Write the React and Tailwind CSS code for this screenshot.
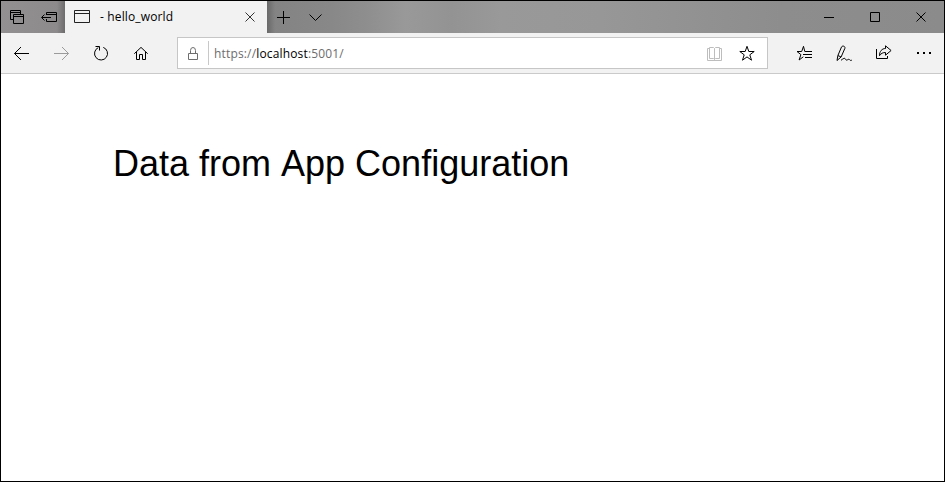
function Icon({ box, w, h, className = "", children }) {
  return (
    <svg
      viewBox={box}
      width={w}
      height={h}
      fill="none"
      stroke="currentColor"
      strokeWidth="1"
      className={`block shrink-0 ${className}`}
    >
      {children}
    </svg>
  );
}

function TitleBar() {
  return (
    <div className="flex h-8 shrink-0 bg-[linear-gradient(90deg,#929090_0px,#8c8a8a_60px,#838383_270px,#888888_330px,#8e8e8e_365px,#999999_405px,#939393_450px,#999999_500px,#979797_600px,#929292_690px,#8d8d8d_780px,#8b8b8b_943px)] text-black">
      <div className="flex w-16 bg-[linear-gradient(90deg,transparent_56px,rgba(0,0,0,0.22)_64px)]">
        <Icon box="1 1 32 32" w={32} h={32}>
          <path d="M13.5 19.5h-3v-9h10v4M10.5 12.5h10M13.5 14.5h10v9h-10zM13.5 16.5h10" />
        </Icon>
        <Icon box="33 1 32 32" w={32} h={32}>
          <path d="M46.5 15V12.5h10v9h-10V19M46.5 14.5h10M42 17.5h9M44.5 14.5l-3 3 3 3" />
        </Icon>
      </div>
      <div className="flex w-[202px] bg-[#f2f2f2]">
        <Icon box="65 1 34 32" w={34} h={32} className="text-[#222]">
          <path d="M74.5 10.5h15v12h-15zM74.5 13.5h15" />
        </Icon>
        <div className="grow pl-px font-['Open_Sans','Noto_Sans',sans-serif] text-[12px] leading-8 tracking-[0.14px] whitespace-pre">
          - hello_world
        </div>
        <Icon box="235 1 32 32" w={32} h={32} className="text-[#333]">
          <path d="M245.5 12.5l9 9M254.5 12.5l-9 9" />
        </Icon>
      </div>
      <div className="flex grow bg-[linear-gradient(90deg,rgba(0,0,0,0.2)_0px,transparent_8px)]">
        <Icon box="267 1 32 32" w={32} h={32}>
          <path d="M277 17.5h13M283.5 11v13" />
        </Icon>
        <Icon box="299 1 32 32" w={32} h={32}>
          <path d="M309.5 14.5l6 6 6-6" />
        </Icon>
      </div>
      <Icon box="806 1 46 32" w={46} h={32}>
        <path d="M824 17.5h10" />
      </Icon>
      <Icon box="852 1 46 32" w={46} h={32}>
        <path d="M870.5 12.5h9v9h-9z" />
      </Icon>
      <Icon box="898 1 46 32" w={46} h={32}>
        <path d="M916.5 12.5l9 9M925.5 12.5l-9 9" />
      </Icon>
    </div>
  );
}

function AddressBar() {
  return (
    <div className="flex h-8 w-[591px] shrink-0 items-center border border-[#c6c6c6] bg-white">
      <Icon box="178 38 30 30" w={30} h={30} className="text-[#6e6e6e]">
        <path d="M188.5 53.5h9v6h-9zM190.5 53.5v-3a2.5 3 0 0 1 5 0v3" />
      </Icon>
      <div className="h-6 w-px bg-[#c8c8c8]" />
      <div className="grow pt-0.5 pl-[5px] font-['Open_Sans','Noto_Sans',sans-serif] text-[12px] leading-[30px] tracking-[0.16px] text-[#6d6d6d]">
        https://<span className="text-black">localhost</span>:5001/
      </div>
      <Icon box="698 38 32 30" w={32} h={30} className="text-[#bdbdbd]">
        <path d="M709.5 47.5h4l1 1 1-1h4v11h-4l-1 1-1-1h-4zM714.5 48.5v11M709.5 48.5h-2v12h14v-12h-2" />
      </Icon>
      <Icon box="730 38 37 30" w={37} h={30} className="text-black">
        <path d="M747 46.3l1.8 5.2h5.4l-4.4 3.3 1.7 5.4-4.5-3.3-4.5 3.3 1.7-5.4-4.4-3.3h5.4z" />
      </Icon>
    </div>
  );
}

function Toolbar() {
  return (
    <div className="flex h-[41px] shrink-0 items-start border-b border-[#cacaca] bg-[#f2f2f2] text-black">
      <Icon box="1 33 40 40" w={40} h={40}>
        <path d="M14.5 53.5H29M21 47l-6.5 6.5L21 60" />
      </Icon>
      <Icon box="41 33 40 40" w={40} h={40} className="text-[#9b9b9b]">
        <path d="M54 53.5h14.5M62 47l6.5 6.5L62 60" />
      </Icon>
      <Icon box="81 33 40 40" w={40} h={40}>
        <path d="M103.3 47.4a6.5 6.5 0 1 1-5 .2M95.5 46.5h4v4" />
      </Icon>
      <Icon box="121 33 56 40" w={56} h={40}>
        <path d="M134.3 53.7l6.7-6.3 6.7 6.3M136.500 52v7.500h3v-5h3v5h3V52" />
      </Icon>
      <div className="pt-1">
        <AddressBar />
      </div>
      <div className="flex grow justify-end">
        <Icon box="784 33 40 40" w={40} h={40}>
          <path d="M806 51.5h-1.2L803.5 46.300l-1.800 5.200h-4.700l3.900 3.100-1.800 5.400 4.200-3.200" />
          <path d="M805 51.5h7M803 54.5h9M805 57.5h7" />
        </Icon>
        <Icon box="824 33 40 40" w={40} h={40}>
          <path d="M837 60.5l.9-5 3.600-8.500c.9-1.700 4-.9 3.400 1.300l-3.800 8.700zM837.900 55.500l3.200 1.500M841 60.300c2.500-2 3.800-2.600 4.500-1.300.5 1 1 1.500 2 .8 1.200-.7 1.700-.6 2.200.1.400.6 1.200.7 2.200.2" />
        </Icon>
        <Icon box="864 33 40 40" w={40} h={40}>
          <path d="M876.5 49v9.500h11V56M879.500 55.700c0-4.500 2.500-7.200 6-7.200v-2.700l5.600 4.700-5.600 4.700v-2.700c-2.500 0-4.500.8-6 3.200z" />
        </Icon>
        <Icon box="904 33 40 40" w={40} h={40}>
          <path d="M917 53h2M923 53h2M929 53h2" strokeWidth="2" />
        </Icon>
      </div>
    </div>
  );
}

export default function App() {
  return (
    <div className="flex h-[482px] w-[945px] flex-col overflow-hidden border border-black bg-white">
      <TitleBar />
      <Toolbar />
      <main className="pt-[69px] pl-28">
        <h1 className="font-['Liberation_Sans',Arial,sans-serif] text-[36px] leading-[42px] font-normal text-black [font-kerning:none]">
          Data from App Configuration
        </h1>
      </main>
    </div>
  );
}
